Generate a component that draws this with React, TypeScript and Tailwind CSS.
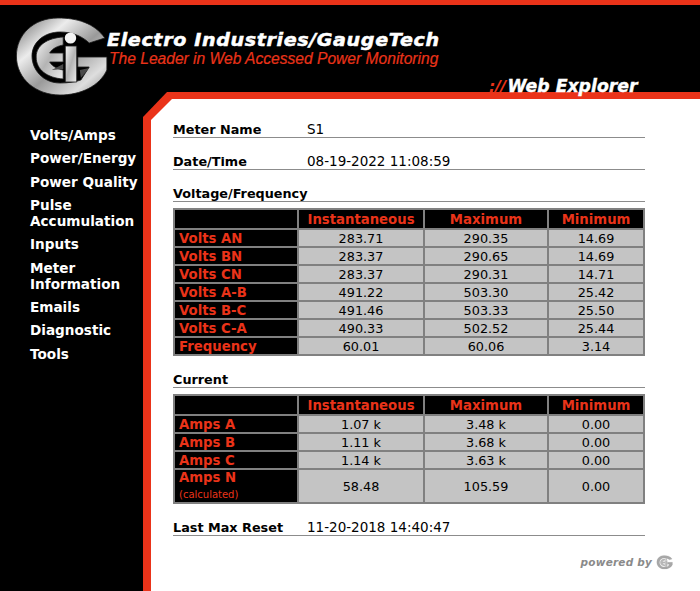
function Logo({ id, className, small }: { id: string; className: string; small?: boolean }) {
  const edge = small ? "#8a8a8a" : "#1c1c1c";
  return (
    <svg viewBox="0 0 100 90" preserveAspectRatio="none" className={className}>
      <defs>
        <linearGradient id={id + "a"} x1="0" y1="0" x2="1" y2="1">
          <stop offset="0" stopColor="#6a6a6a" />
          <stop offset="0.3" stopColor="#ececec" />
          <stop offset="0.55" stopColor="#9a9a9a" />
          <stop offset="0.8" stopColor="#dedede" />
          <stop offset="1" stopColor="#8a8a8a" />
        </linearGradient>
        <linearGradient id={id + "b"} x1="0" y1="0" x2="1" y2="1">
          <stop offset="0" stopColor="#f6f6f6" />
          <stop offset="0.5" stopColor="#b4b4b4" />
          <stop offset="1" stopColor="#ececec" />
        </linearGradient>
      </defs>
      <path
        d="M95 28 C85 13 68 8 50 8 C26 8 10 25 10 46 C10 69 29 85 52 85 C72 85 90 76 97 60 L97 47 L69 47 L69 57 L80 57 L72 70 C66 72 60 73 52 73 C36 73 25 60 25 46 C25 32 37 22 52 22 C62 22 72 25 80 33 Z"
        fill={small ? "#a8a8a8" : `url(#${id}a)`}
        stroke={edge}
        strokeWidth="0.8"
      />
      <path
        d="M55 27 C40 28 29 35 29 47 C29 60 40 68 55 69 L55 60 C50 59 45 57 42 52 L55 52 L55 43 L42 43 C45 38 50 36 55 35 Z"
        fill={small ? "#b8b8b8" : `url(#${id}b)`}
        stroke={edge}
        strokeWidth="0.8"
      />
      <circle cx="62" cy="28" r="5.5" fill={small ? "#b8b8b8" : "#f4f4f4"} />
      <path d="M57 36 L68 36 L68 72 L57 72 Z" fill={small ? "#b8b8b8" : `url(#${id}b)`} stroke={edge} strokeWidth="0.8" />
      {!small && <path d="M44 60 L55 54 L55 59 Z M71 60 L80 58 L72 68 Z" fill="#4a4a4a" />}
    </svg>
  );
}

function Rule({ label, value }: { label: string; value?: string }) {
  return (
    <div className="flex items-baseline border-b border-[#8c8c8c] h-[16px]">
      <span className={`w-[134px] whitespace-nowrap font-bold text-[12.8px] text-black ${value ? "leading-[14px]" : "leading-[16px]"}`}>{label}</span>
      {value && <span className="text-[13.5px] leading-[14px] text-black">{value}</span>}
    </div>
  );
}

type Row = { name: string; sub?: string; v: [string, string, string] };

function DataTable({ rows }: { rows: Row[] }) {
  const head = ["", "Instantaneous", "Maximum", "Minimum"];
  return (
    <div className="grid grid-cols-[122px_124px_122px_1fr] gap-[2px] bg-[#808080] p-[2px]">
      {head.map((h, i) => (
        <div key={i} className="bg-black text-[#ea3319] text-center font-bold text-[13.25px] leading-[19px] h-[18px]">
          {h}
        </div>
      ))}
      {rows.map((r) => (
        <div key={r.name} className="contents">
          <div className="bg-black text-[#ea3319] pl-[4px] pt-[1px] font-bold text-[13.25px] leading-[15px] min-h-[16px]">
            <div className={r.sub ? "-mt-[1px]" : ""}>{r.name}</div>
            {r.sub && <div className="font-normal text-[10px] leading-[14px] mt-[3px]">{r.sub}</div>}
          </div>
          {r.v.map((x, i) => (
            <div key={i} className="bg-[#c4c4c4] flex items-center justify-center pt-[1px] text-[12.8px] leading-[15px] text-black">
              {x}
            </div>
          ))}
        </div>
      ))}
    </div>
  );
}

const volts: Row[] = [
  { name: "Volts AN", v: ["283.71", "290.35", "14.69"] },
  { name: "Volts BN", v: ["283.37", "290.65", "14.69"] },
  { name: "Volts CN", v: ["283.37", "290.31", "14.71"] },
  { name: "Volts A-B", v: ["491.22", "503.30", "25.42"] },
  { name: "Volts B-C", v: ["491.46", "503.33", "25.50"] },
  { name: "Volts C-A", v: ["490.33", "502.52", "25.44"] },
  { name: "Frequency", v: ["60.01", "60.06", "3.14"] },
];
const amps: Row[] = [
  { name: "Amps A", v: ["1.07 k", "3.48 k", "0.00"] },
  { name: "Amps B", v: ["1.11 k", "3.68 k", "0.00"] },
  { name: "Amps C", v: ["1.14 k", "3.63 k", "0.00"] },
  { name: "Amps N", sub: "(calculated)", v: ["58.48", "105.59", "0.00"] },
];
const nav = ["Volts/Amps", "Power/Energy", "Power Quality", "Pulse Accumulation", "Inputs", "Meter Information", "Emails", "Diagnostic", "Tools"];

export default function App() {
  return (
    <div className="w-[700px] h-[591px] overflow-hidden bg-black flex flex-col font-['DejaVu_Sans',sans-serif]">
      <div className="h-[5px] bg-[#ea3319] shrink-0" />
      <header className="h-[87px] shrink-0 flex relative z-10">
        <Logo id="m" className="w-[104px] h-[90px] ml-[6px] mt-[5px] shrink-0" />
        <div className="-ml-[3px] pt-[24px] italic">
          <div className="origin-left scale-x-[1.06] font-bold text-white text-[18px] leading-[22px] tracking-[0.6px] whitespace-nowrap [-webkit-text-stroke:0.5px_white]">Electro Industries/GaugeTech</div>
          <div className="font-['Liberation_Sans',sans-serif] text-[#ea3319] text-[15.6px] leading-[18px] ml-[2px] -mt-[1px] whitespace-nowrap [-webkit-text-stroke:0.2px_#ea3319]">The Leader in Web Accessed Power Monitoring</div>
        </div>
        <div className="absolute left-[489px] top-[71px] italic font-bold text-[17.3px] leading-[20px] text-white whitespace-nowrap [-webkit-text-stroke:0.4px_white]">
          <span className="text-[#ea3319] [-webkit-text-stroke:0] text-[16px] tracking-[-0.5px] mr-[2px]">://</span>Web Explorer
        </div>
      </header>
      <div className="flex flex-1 min-h-0">
        <nav className="w-[143px] shrink-0 pl-[30px] pt-[35px]">
          {nav.map((n) => (
            <div key={n} className="text-white font-bold text-[13.6px] leading-[16px] mb-[7.35px] w-[110px]">{n}</div>
          ))}
        </nav>
        <div className="flex-1 bg-[#ea3319] pl-[8px] pt-[7px] [clip-path:polygon(24px_0,100%_0,100%_100%,0_100%,0_25px)]">
          <main className="h-full bg-white pl-[22px] pr-[55px] pt-[23px] [clip-path:polygon(21px_0,100%_0,100%_100%,0_100%,0_21px)]">
            <Rule label="Meter Name" value="S1" />
            <div className="h-[16px]" />
            <Rule label="Date/Time" value="08-19-2022 11:08:59" />
            <div className="h-[16px]" />
            <Rule label="Voltage/Frequency" />
            <div className="h-[6px]" />
            <DataTable rows={volts} />
            <div className="h-[16px]" />
            <Rule label="Current" />
            <div className="h-[6px]" />
            <DataTable rows={amps} />
            <div className="h-[16px]" />
            <Rule label="Last Max Reset" value="11-20-2018 14:40:47" />
            <div className="flex justify-end items-center mt-[18px] -mr-[28px] gap-[3px]">
              <span className="text-[#8a8a8a] italic font-bold text-[10.5px] leading-[16px] tracking-[0.2px]">powered by</span>
              <Logo id="s" small className="w-[18px] h-[16px]" />
            </div>
          </main>
        </div>
      </div>
    </div>
  );
}
